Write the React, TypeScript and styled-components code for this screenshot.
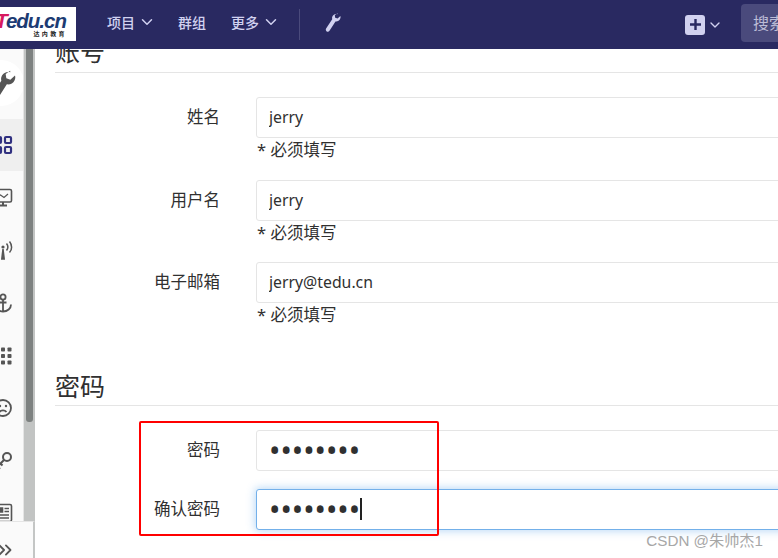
import styled, { createGlobalStyle } from "styled-components";
import { ChevronDown, ChevronsRight } from "lucide-react";

const navBg = "#292961";
const navText = "#d1d1f0";
const textColor = "#303030";
const lineColor = "#e5e5e5";

const GlobalStyle = createGlobalStyle`
  html, body {
    margin: 0;
    padding: 0;
    height: 100%;
    overflow: hidden;
    background: #fff;
  }
  body {
    font-family: "Noto Sans", "Noto Sans CJK SC", sans-serif;
    color: ${textColor};
  }
`;

const Page = styled.div`
  position: relative;
  width: 778px;
  height: 558px;
  overflow: hidden;
  display: flex;
  flex-direction: column;
`;

const Header = styled.header`
  flex: none;
  height: 49px;
  background: ${navBg};
  display: flex;
  align-items: center;
  overflow: hidden;
`;

const Logo = styled.div`
  flex: none;
  width: 76px;
  height: 34px;
  margin-bottom: 1px;
  background: #fff;
  display: flex;
  flex-direction: column;
  align-items: flex-end;
  justify-content: center;
  overflow: hidden;
  padding-right: 10px;
  box-sizing: border-box;
`;

const LogoWord = styled.div`
  font-family: "Liberation Sans", sans-serif;
  font-size: 20.5px;
  line-height: 19px;
  font-weight: 700;
  font-style: italic;
  letter-spacing: -1px;
  color: #1c3b73;
  white-space: nowrap;
  span {
    color: #d8195f;
  }
`;

const LogoSub = styled.div`
  font-family: "Noto Sans CJK SC", sans-serif;
  font-size: 6px;
  line-height: 8px;
  font-weight: 700;
  letter-spacing: 2.4px;
  color: #222;
  margin-right: -1px;
`;

const NavItem = styled.div<{ $gap: number }>`
  display: flex;
  align-items: center;
  gap: 3px;
  margin-left: ${(props) => props.$gap}px;
  margin-bottom: 6px;
  font-size: 14px;
  font-weight: 500;
  color: ${navText};
  white-space: nowrap;
`;

const NavDivider = styled.div`
  width: 1px;
  height: 31px;
  margin-left: 19px;
  margin-bottom: 1px;
  background: #4a4a7c;
`;

const NavWrench = styled.svg`
  width: 18px;
  height: 22px;
  margin-left: 23px;
  margin-bottom: 4px;
  fill: ${navText};
`;

const HeaderRight = styled.div`
  margin-left: auto;
  display: flex;
  align-items: center;
`;

const PlusButton = styled.div`
  width: 20px;
  height: 20px;
  border-radius: 3px;
  background: ${navText};
  color: ${navBg};
  display: flex;
  align-items: center;
  justify-content: center;
  margin-right: 2px;
`;

const SearchBox = styled.div`
  width: 60px;
  height: 38px;
  margin-left: 18px;
  margin-right: -23px;
  margin-bottom: 4px;
  padding-left: 12px;
  box-sizing: border-box;
  border-radius: 4px;
  background: #4a4a7c;
  color: #bcbcd6;
  font-size: 16px;
  line-height: 38px;
  white-space: nowrap;
`;

const Body = styled.div`
  flex: 1;
  display: flex;
  min-height: 0;
`;

const Sidebar = styled.aside`
  position: relative;
  flex: none;
  width: 24px;
  background: #fafafa;
  border-right: 1px solid #e5e5e5;
  box-sizing: border-box;
  overflow: hidden;
`;

const ContextAvatar = styled.div`
  width: 46px;
  height: 46px;
  margin: 11px 0 0 -22px;
  border-radius: 50%;
  background: #fff;
  display: flex;
  align-items: center;
  justify-content: center;
  box-sizing: border-box;
  svg {
    flex: none;
    margin-top: 8px;
    fill: #555;
  }
`;

const SideList = styled.div`
  margin-top: 12.5px;
  display: flex;
  flex-direction: column;
`;

const SideItem = styled.div<{ $active?: boolean }>`
  height: 52.6px;
  padding: 1px 10px 0 0;
  box-sizing: border-box;
  display: flex;
  align-items: center;
  justify-content: flex-end;
  background: ${(props) => (props.$active ? "#efefef" : "transparent")};
  color: ${(props) => (props.$active ? "#303080" : "#555")};
  svg {
    flex: none;
    width: 20px;
    height: 20px;
  }
`;

const Collapse = styled.div`
  position: absolute;
  left: 0;
  bottom: 0;
  width: 35px;
  height: 37px;
  background: #fafafa;
  border-top: 1px solid #e5e5e5;
  border-right: 2px solid #c4c6c5;
  box-sizing: border-box;
  display: flex;
  align-items: center;
  justify-content: flex-end;
  padding: 20px 17px 0 0;
  color: #555;
  z-index: 2;
  svg {
    flex: none;
  }
`;

const ScrollTrack = styled.div`
  flex: none;
  width: 11px;
  background: #c2c4c3;
  padding: 0 2px;
  box-sizing: border-box;
`;

const ScrollThumb = styled.div`
  height: 373px;
  background: #7d8180;
  border-radius: 0 0 3px 3px;
`;

const Main = styled.main`
  flex: 1;
  min-width: 0;
  overflow: hidden;
  padding-left: 20px;
`;

const SectionTitle = styled.h3<{ $top: number; $line: number }>`
  margin: ${(props) => props.$top}px 0 0;
  height: 40px;
  line-height: ${(props) => props.$line}px;
  font-size: 25px;
  font-weight: 400;
  color: ${textColor};
  border-bottom: 1px solid ${lineColor};
  box-sizing: content-box;
`;

const Row = styled.div<{ $top: number }>`
  display: flex;
  margin-top: ${(props) => props.$top}px;
`;

const Label = styled.label`
  flex: none;
  width: 165px;
  text-align: right;
  font-size: 16.5px;
  line-height: 39.5px;
  color: ${textColor};
`;

const Field = styled.div`
  position: relative;
  flex: none;
  width: 560px;
  margin-left: 36px;
`;

const Input = styled.input<{ $focus?: boolean; $secret?: boolean }>`
  display: block;
  width: 100%;
  height: 41px;
  padding: ${(props) => (props.$secret ? "0 12px" : "0 12px 1px")};
  box-sizing: border-box;
  border: 1px solid ${(props) => (props.$focus ? "#73b0ea" : lineColor)};
  border-radius: 3px;
  outline: none;
  background: #fff;
  font-family: inherit;
  font-size: ${(props) => (props.$secret ? "30.3px" : "15.8px")};
  color: ${textColor};
  box-shadow: ${(props) =>
    props.$focus ? "0 0 8px 1px rgba(97, 168, 235, 0.45)" : "none"};
`;

const Hint = styled.div`
  height: 23.7px;
  line-height: 24px;
  font-size: 16.5px;
  margin-left: 1px;
  color: ${textColor};
`;

const Caret = styled.span`
  position: absolute;
  left: 104px;
  top: 9px;
  width: 2px;
  height: 22px;
  background: #222;
`;

const Callout = styled.div`
  position: absolute;
  left: 139px;
  top: 421px;
  width: 300px;
  height: 115px;
  border: 2px solid #f00;
  border-radius: 2px;
  box-sizing: border-box;
  pointer-events: none;
`;

const Watermark = styled.div`
  position: absolute;
  right: 15px;
  bottom: 8px;
  font-family: "Liberation Sans", "Noto Sans CJK SC", sans-serif;
  font-size: 15.2px;
  line-height: 18px;
  color: #a3a3a3;
  opacity: 0.95;
  white-space: nowrap;
`;

const WrenchPath =
  "M14.6 1.2c-1.9-.6-4 .2-5 1.9-.6 1-.7 2.1-.4 3.2L3.1 15.6c-.6 1-.3 2.2.6 2.8.9.6 2.2.3 2.8-.7l6-9.3c1.9.3 3.8-.6 4.6-2.3.5-1 .6-2 .3-3l-2.8 2.5-2.4-.9-.4-2.5 2.7-2z";

const IconGrid = () => (
  <svg viewBox="0 0 20 20" fill="none" stroke="currentColor" strokeWidth="2.2">
    <rect x="2" y="2" width="6" height="6" rx="1" />
    <rect x="12" y="2" width="6" height="6" rx="1" />
    <rect x="2" y="12" width="6" height="6" rx="1" />
    <rect x="12" y="12" width="6" height="6" rx="1" />
  </svg>
);

const IconMonitor = () => (
  <svg viewBox="0 0 20 20" fill="none" stroke="currentColor" strokeWidth="1.6">
    <rect x="1.5" y="1.5" width="17" height="12.5" rx="1.5" />
    <path d="M4 9l3.5-2 3.5 2.5L15 6" strokeWidth="1.2" />
    <path d="M6 17.5h8M10 14v3.5" strokeWidth="2" />
  </svg>
);

const IconAntenna = () => (
  <svg viewBox="0 0 20 20" fill="none" stroke="currentColor" strokeWidth="1.5">
    <circle cx="10" cy="7" r="1.6" fill="currentColor" stroke="none" />
    <path d="M8.8 19l1.2-10 1.2 10z" fill="currentColor" />
    <path d="M6.5 3.5c-1.6 2-1.6 5 0 7M13.5 3.5c1.6 2 1.6 5 0 7M3.5 1.5c-2.8 3.4-2.8 8 0 11M16.5 1.5c2.8 3.4 2.8 8 0 11" />
  </svg>
);

const IconAnchor = () => (
  <svg viewBox="0 0 20 20" fill="none" stroke="currentColor" strokeWidth="1.8">
    <circle cx="10" cy="4" r="2.6" />
    <path d="M10 6.6V18.5M2 11.5c0 4 3.5 7 8 7s8-3 8-7M6.5 9.5h7" />
  </svg>
);

const IconDots = () => (
  <svg viewBox="0 0 20 20" fill="currentColor">
    <rect x="1.5" y="1.5" width="4" height="4" rx=".8" />
    <rect x="8" y="1.5" width="4" height="4" rx=".8" />
    <rect x="14.5" y="1.5" width="4" height="4" rx=".8" />
    <rect x="1.5" y="8" width="4" height="4" rx=".8" />
    <rect x="8" y="8" width="4" height="4" rx=".8" />
    <rect x="14.5" y="8" width="4" height="4" rx=".8" />
    <rect x="1.5" y="14.5" width="4" height="4" rx=".8" />
    <rect x="8" y="14.5" width="4" height="4" rx=".8" />
    <rect x="14.5" y="14.5" width="4" height="4" rx=".8" />
  </svg>
);

const IconSad = () => (
  <svg viewBox="0 0 20 20" fill="none" stroke="currentColor" strokeWidth="1.8">
    <circle cx="10" cy="10" r="8" />
    <circle cx="7" cy="8" r="1.2" fill="currentColor" stroke="none" />
    <circle cx="13" cy="8" r="1.2" fill="currentColor" stroke="none" />
    <path d="M6.5 14c1.8-2.2 5.2-2.2 7 0" />
  </svg>
);

const IconKey = () => (
  <svg viewBox="0 0 20 20" fill="none" stroke="currentColor" strokeWidth="2">
    <circle cx="14" cy="6" r="4" />
    <path d="M11 9l-9 9M4.5 15.5l2.5 2.5M7.5 12.5l2 2" />
  </svg>
);

const IconNews = () => (
  <svg viewBox="0 0 20 20" fill="none" stroke="currentColor" strokeWidth="1.6">
    <rect x="2" y="1.5" width="16.5" height="17" rx="1.5" />
    <path d="M4.5 5h5v4h-5z" fill="currentColor" />
    <path d="M11.5 5.5h4.5M11.5 8.5h4.5M4.5 12h11.5M4.5 15h11.5" />
  </svg>
);

const sideIcons = [
  <IconGrid />,
  <IconMonitor />,
  <IconAntenna />,
  <IconAnchor />,
  <IconDots />,
  <IconSad />,
  <IconKey />,
  <IconNews />,
];

const accountFields = [
  { label: "姓名", value: "jerry", top: 24 },
  { label: "用户名", value: "jerry", top: 18 },
  { label: "电子邮箱", value: "jerry@tedu.cn", top: 18 },
];

const App = () => {
  return (
    <>
      <GlobalStyle />
      <Page>
        <Header>
          <Logo>
            <LogoWord>
              <span>T</span>edu.cn
            </LogoWord>
            <LogoSub>达内教育</LogoSub>
          </Logo>
          <NavItem $gap={31}>
            项目 <ChevronDown size={18} strokeWidth={2} />
          </NavItem>
          <NavItem $gap={22}>群组</NavItem>
          <NavItem $gap={25}>
            更多 <ChevronDown size={18} strokeWidth={2} />
          </NavItem>
          <NavDivider />
          <NavWrench viewBox="0 0 18 20">
            <path d={WrenchPath} />
          </NavWrench>
          <HeaderRight>
            <PlusButton>
              <svg width="13" height="13" viewBox="0 0 13 13">
                <path d="M6.5 1v11M1 6.5h11" stroke="currentColor" strokeWidth="2.4" />
              </svg>
            </PlusButton>
            <ChevronDown size={16} strokeWidth={2} color={navText} />
            <SearchBox>搜索</SearchBox>
          </HeaderRight>
        </Header>
        <Body>
          <Sidebar>
            <ContextAvatar>
              <svg width="30" height="38" viewBox="0 0 18 20">
                <path d={WrenchPath} />
              </svg>
            </ContextAvatar>
            <SideList>
              {sideIcons.map((icon, i) => (
                <SideItem key={i} $active={i === 0}>
                  {icon}
                </SideItem>
              ))}
            </SideList>
          </Sidebar>
          <ScrollTrack>
            <ScrollThumb />
          </ScrollTrack>
          <Main>
            <SectionTitle $top={-17} $line={38}>账号</SectionTitle>
            {accountFields.map((field) => (
              <Row key={field.label} $top={field.top}>
                <Label>{field.label}</Label>
                <Field>
                  <Input readOnly value={field.value} />
                  <Hint>* 必须填写</Hint>
                </Field>
              </Row>
            ))}
            <SectionTitle $top={38} $line={43}>密码</SectionTitle>
            <Row $top={24}>
              <Label>密码</Label>
              <Field>
                <Input $secret readOnly type="password" value="12345678" />
              </Field>
            </Row>
            <Row $top={18}>
              <Label>确认密码</Label>
              <Field>
                <Input $secret $focus readOnly type="password" value="12345678" />
                <Caret />
              </Field>
            </Row>
          </Main>
        </Body>
        <Callout />
        <Collapse>
          <ChevronsRight size={22} strokeWidth={2} />
        </Collapse>
        <Watermark>CSDN @朱帅杰1</Watermark>
      </Page>
    </>
  );
};

export default App;
